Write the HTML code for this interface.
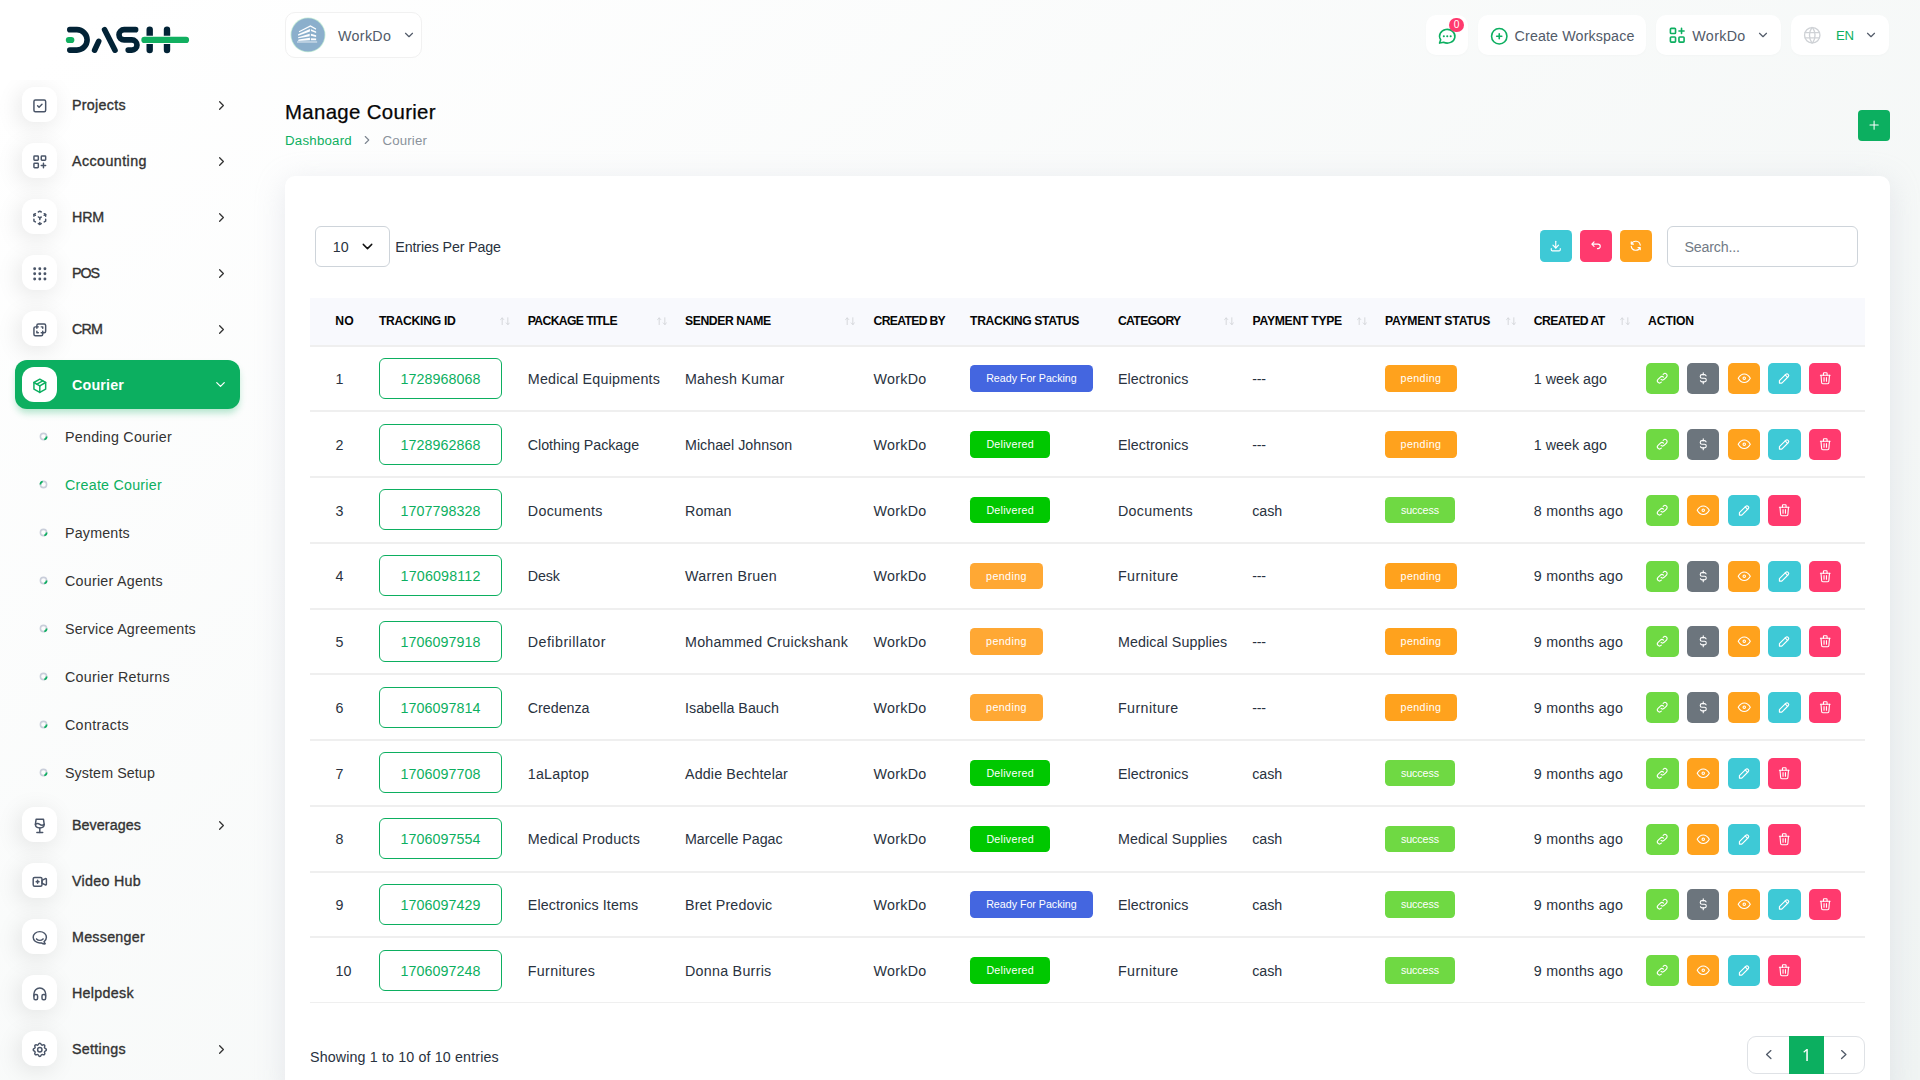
<!DOCTYPE html>
<html lang="en"><head><meta charset="utf-8"><title>Manage Courier</title>
<style>
*{box-sizing:border-box;margin:0;padding:0}
html,body{width:1920px;height:1080px;overflow:hidden}
body{font-family:"Liberation Sans",sans-serif;position:relative;background:linear-gradient(141.55deg,#ffffff 3.46%,#f0f4f3 99.86%);}
.t{position:absolute;white-space:nowrap;line-height:20px;height:20px;display:block}
.b{position:absolute}
.i{position:absolute;fill:none;stroke-linecap:round;stroke-linejoin:round;overflow:visible}
</style></head><body>

<svg class="b" style="left:60px;top:20px" width="140" height="40" viewBox="60 20 140 40" fill="none" stroke-linecap="round" stroke-linejoin="round">
<g stroke="#022336" stroke-width="5.6">
<path d="M69.8 29.65H76.9A10.2 10.2 0 0 1 76.9 50.1H69.8"/>
<path d="M104.6 29.7L115 50.2"/><path d="M98.7 41.4L94.6 50.2"/>
<path d="M135.6 29.65H124.1A5.1 5.1 0 0 0 124.1 39.9H131.9A5.1 5.1 0 0 1 131.9 50.1H128.2"/>
<path d="M149.7 29.8V50" stroke-width="6.4"/><path d="M167 29.8V50" stroke-width="6.4"/>
</g>
<path d="M144.4 39.9H186" stroke="#fff" stroke-width="8.3"/>
<g stroke="#11AF60" stroke-width="6.2"><path d="M68.9 40H71.3"/><path d="M144.4 39.9H186"/></g>
</svg>

<div class="b" style="left:0;top:0;width:280px;height:1080px;clip-path:inset(80px 0 0 0)">
<div class="b" style="left:22.00px;top:87.00px;width:35.00px;height:35.00px;background:#fff;border-radius:12px;box-shadow:-3px 4px 23px rgba(0,0,0,0.1);"></div>
<svg class="i" style="left:31.00px;top:97.05px;" width="17.6" height="17.6" viewBox="0 0 24 24" stroke="#4a5568" stroke-width="2"><rect x="4" y="4" width="16" height="16" rx="2"/><path d="M9 12l2 2l4 -4"/></svg>
<span class="t" style="left:72.00px;top:95.48px;font-size:14.28px;letter-spacing:0.302px;color:#333;-webkit-text-stroke:0.35px #333;">Projects</span>
<svg class="i" style="left:214.00px;top:98.00px;" width="15" height="15" viewBox="0 0 24 24" stroke="#333" stroke-width="2"><path d="M9 6l6 6l-6 6"/></svg>
<div class="b" style="left:22.00px;top:143.00px;width:35.00px;height:35.00px;background:#fff;border-radius:12px;box-shadow:-3px 4px 23px rgba(0,0,0,0.1);"></div>
<svg class="i" style="left:31.00px;top:153.05px;" width="17.6" height="17.6" viewBox="0 0 24 24" stroke="#4a5568" stroke-width="2"><rect x="4" y="4" width="6" height="6" rx="1"/><rect x="14" y="4" width="6" height="6" rx="1"/><rect x="4" y="14" width="6" height="6" rx="1"/><path d="M14 17h6m-3 -3v6"/></svg>
<span class="t" style="left:72.00px;top:151.48px;font-size:14.28px;letter-spacing:0.434px;color:#333;-webkit-text-stroke:0.35px #333;">Accounting</span>
<svg class="i" style="left:214.00px;top:154.00px;" width="15" height="15" viewBox="0 0 24 24" stroke="#333" stroke-width="2"><path d="M9 6l6 6l-6 6"/></svg>
<div class="b" style="left:22.00px;top:199.00px;width:35.00px;height:35.00px;background:#fff;border-radius:12px;box-shadow:-3px 4px 23px rgba(0,0,0,0.1);"></div>
<svg class="i" style="left:31.00px;top:209.05px;" width="17.6" height="17.6" viewBox="0 0 24 24" stroke="#4a5568" stroke-width="2"><path d="M6 17.6l-2 -1.1v-2.5"/><path d="M4 10v-2.5l2 -1.1"/><path d="M10 4.1l2 -1.1l2 1.1"/><path d="M18 6.4l2 1.1v2.5"/><path d="M20 14v2.5l-2 1.12"/><path d="M14 19.9l-2 1.1l-2 -1.1"/><path d="M12 12l2 -1.1"/><path d="M18 8.6l2 -1.1"/><path d="M12 12l0 2.5"/><path d="M12 18.5l0 2.5"/><path d="M12 12l-2 -1.12"/><path d="M6 8.6l-2 -1.1"/></svg>
<span class="t" style="left:72.00px;top:207.48px;font-size:14.28px;letter-spacing:-0.174px;color:#333;-webkit-text-stroke:0.35px #333;">HRM</span>
<svg class="i" style="left:214.00px;top:210.00px;" width="15" height="15" viewBox="0 0 24 24" stroke="#333" stroke-width="2"><path d="M9 6l6 6l-6 6"/></svg>
<div class="b" style="left:22.00px;top:255.00px;width:35.00px;height:35.00px;background:#fff;border-radius:12px;box-shadow:-3px 4px 23px rgba(0,0,0,0.1);"></div>
<svg class="i" style="left:31.00px;top:265.05px;" width="17.6" height="17.6" viewBox="0 0 24 24" stroke="#4a5568" stroke-width="2"><circle cx="5" cy="5" r="1"/><circle cx="12" cy="5" r="1"/><circle cx="19" cy="5" r="1"/><circle cx="5" cy="12" r="1"/><circle cx="12" cy="12" r="1"/><circle cx="19" cy="12" r="1"/><circle cx="5" cy="19" r="1"/><circle cx="12" cy="19" r="1"/><circle cx="19" cy="19" r="1"/></svg>
<span class="t" style="left:72.00px;top:263.48px;font-size:14.28px;letter-spacing:-1.053px;color:#333;-webkit-text-stroke:0.35px #333;">POS</span>
<svg class="i" style="left:214.00px;top:266.00px;" width="15" height="15" viewBox="0 0 24 24" stroke="#333" stroke-width="2"><path d="M9 6l6 6l-6 6"/></svg>
<div class="b" style="left:22.00px;top:311.00px;width:35.00px;height:35.00px;background:#fff;border-radius:12px;box-shadow:-3px 4px 23px rgba(0,0,0,0.1);"></div>
<svg class="i" style="left:31.00px;top:321.05px;" width="17.6" height="17.6" viewBox="0 0 24 24" stroke="#4a5568" stroke-width="2"><path d="M16 16v2a2 2 0 0 1 -2 2h-8a2 2 0 0 1 -2 -2v-8a2 2 0 0 1 2 -2h2v-2a2 2 0 0 1 2 -2h8a2 2 0 0 1 2 2v8a2 2 0 0 1 -2 2h-2"/><path d="M10 8l-2 0l0 2"/><path d="M8 14l0 2l2 0"/><path d="M14 8l2 0l0 2"/><path d="M16 14l0 2l-2 0"/></svg>
<span class="t" style="left:72.00px;top:319.48px;font-size:14.28px;letter-spacing:-0.841px;color:#333;-webkit-text-stroke:0.35px #333;">CRM</span>
<svg class="i" style="left:214.00px;top:322.00px;" width="15" height="15" viewBox="0 0 24 24" stroke="#333" stroke-width="2"><path d="M9 6l6 6l-6 6"/></svg>
<div class="b" style="left:15.00px;top:360.00px;width:225.00px;height:49.00px;background:#0CAF60;border-radius:12px;box-shadow:0 5px 7px -1px rgba(12,175,96,0.3);"></div>
<div class="b" style="left:22.00px;top:367.00px;width:35.00px;height:35.00px;background:#fff;border-radius:12px;"></div>
<svg class="i" style="left:31.00px;top:377.05px;" width="17.6" height="17.6" viewBox="0 0 24 24" stroke="#0CAF60" stroke-width="2"><path d="M12 3l8 4.5l0 9l-8 4.5l-8 -4.5l0 -9l8 -4.5"/><path d="M12 12l8 -4.5"/><path d="M12 12l0 9"/><path d="M12 12l-8 -4.5"/><path d="M16 5.25l-8 4.5"/></svg>
<span class="t" style="left:72.00px;top:375.48px;font-size:14.30px;letter-spacing:0.164px;color:#fff;font-weight:700;">Courier</span>
<svg class="i" style="left:213.00px;top:376.90px;" width="15" height="15" viewBox="0 0 24 24" stroke="#fff" stroke-width="2"><path d="M6 9l6 6l6 -6"/></svg>
<svg class="b" style="left:39.3px;top:431.6px" width="9" height="9" viewBox="0 0 9 9" fill="none"><circle cx="4.5" cy="4.5" r="3.1" stroke="#c9ceda" stroke-width="1.6"/><path transform="" d="M7.6 4.5A3.1 3.1 0 0 1 5.3 7.5" stroke="#0CAF60" stroke-width="1.7"/></svg>
<span class="t" style="left:65.00px;top:427.48px;font-size:14.28px;letter-spacing:0.253px;color:#333;">Pending Courier</span>
<svg class="b" style="left:39.3px;top:479.6px" width="9" height="9" viewBox="0 0 9 9" fill="none"><circle cx="4.5" cy="4.5" r="3.1" stroke="#c9ceda" stroke-width="1.6"/><path transform="rotate(180 4.5 4.5)" d="M7.6 4.5A3.1 3.1 0 0 1 5.3 7.5" stroke="#0CAF60" stroke-width="1.7"/></svg>
<span class="t" style="left:65.00px;top:475.48px;font-size:14.28px;letter-spacing:0.239px;color:#0CAF60;">Create Courier</span>
<svg class="b" style="left:39.3px;top:527.6px" width="9" height="9" viewBox="0 0 9 9" fill="none"><circle cx="4.5" cy="4.5" r="3.1" stroke="#c9ceda" stroke-width="1.6"/><path transform="" d="M7.6 4.5A3.1 3.1 0 0 1 5.3 7.5" stroke="#0CAF60" stroke-width="1.7"/></svg>
<span class="t" style="left:65.00px;top:523.48px;font-size:14.28px;letter-spacing:0.188px;color:#333;">Payments</span>
<svg class="b" style="left:39.3px;top:575.6px" width="9" height="9" viewBox="0 0 9 9" fill="none"><circle cx="4.5" cy="4.5" r="3.1" stroke="#c9ceda" stroke-width="1.6"/><path transform="" d="M7.6 4.5A3.1 3.1 0 0 1 5.3 7.5" stroke="#0CAF60" stroke-width="1.7"/></svg>
<span class="t" style="left:65.00px;top:571.48px;font-size:14.28px;letter-spacing:0.253px;color:#333;">Courier Agents</span>
<svg class="b" style="left:39.3px;top:623.6px" width="9" height="9" viewBox="0 0 9 9" fill="none"><circle cx="4.5" cy="4.5" r="3.1" stroke="#c9ceda" stroke-width="1.6"/><path transform="" d="M7.6 4.5A3.1 3.1 0 0 1 5.3 7.5" stroke="#0CAF60" stroke-width="1.7"/></svg>
<span class="t" style="left:65.00px;top:619.48px;font-size:14.28px;letter-spacing:0.178px;color:#333;">Service Agreements</span>
<svg class="b" style="left:39.3px;top:671.6px" width="9" height="9" viewBox="0 0 9 9" fill="none"><circle cx="4.5" cy="4.5" r="3.1" stroke="#c9ceda" stroke-width="1.6"/><path transform="" d="M7.6 4.5A3.1 3.1 0 0 1 5.3 7.5" stroke="#0CAF60" stroke-width="1.7"/></svg>
<span class="t" style="left:65.00px;top:667.48px;font-size:14.28px;letter-spacing:0.280px;color:#333;">Courier Returns</span>
<svg class="b" style="left:39.3px;top:719.6px" width="9" height="9" viewBox="0 0 9 9" fill="none"><circle cx="4.5" cy="4.5" r="3.1" stroke="#c9ceda" stroke-width="1.6"/><path transform="" d="M7.6 4.5A3.1 3.1 0 0 1 5.3 7.5" stroke="#0CAF60" stroke-width="1.7"/></svg>
<span class="t" style="left:65.00px;top:715.48px;font-size:14.28px;letter-spacing:0.321px;color:#333;">Contracts</span>
<svg class="b" style="left:39.3px;top:767.6px" width="9" height="9" viewBox="0 0 9 9" fill="none"><circle cx="4.5" cy="4.5" r="3.1" stroke="#c9ceda" stroke-width="1.6"/><path transform="" d="M7.6 4.5A3.1 3.1 0 0 1 5.3 7.5" stroke="#0CAF60" stroke-width="1.7"/></svg>
<span class="t" style="left:65.00px;top:763.48px;font-size:14.28px;letter-spacing:0.092px;color:#333;">System Setup</span>
<div class="b" style="left:22.00px;top:807.00px;width:35.00px;height:35.00px;background:#fff;border-radius:12px;box-shadow:-3px 4px 23px rgba(0,0,0,0.1);"></div>
<svg class="i" style="left:31.00px;top:817.05px;" width="17.6" height="17.6" viewBox="0 0 24 24" stroke="#4a5568" stroke-width="2"><path d="M8 21l8 0"/><path d="M12 15l0 6"/><path d="M17 3l1 7c0 3.012 -2.686 5 -6 5s-6 -1.988 -6 -5l1 -7h10z"/><path d="M6 10a5 5 0 0 1 6 0a5 5 0 0 0 6 0"/></svg>
<span class="t" style="left:72.00px;top:815.48px;font-size:14.28px;letter-spacing:0.081px;color:#333;-webkit-text-stroke:0.35px #333;">Beverages</span>
<svg class="i" style="left:214.00px;top:818.00px;" width="15" height="15" viewBox="0 0 24 24" stroke="#333" stroke-width="2"><path d="M9 6l6 6l-6 6"/></svg>
<div class="b" style="left:22.00px;top:863.00px;width:35.00px;height:35.00px;background:#fff;border-radius:12px;box-shadow:-3px 4px 23px rgba(0,0,0,0.1);"></div>
<svg class="i" style="left:31.00px;top:873.05px;" width="17.6" height="17.6" viewBox="0 0 24 24" stroke="#4a5568" stroke-width="2"><path d="M15 10l4.553 -2.276a1 1 0 0 1 1.447 .894v6.764a1 1 0 0 1 -1.447 .894l-4.553 -2.276v-4z"/><rect x="3" y="6" width="12" height="12" rx="2"/><path d="M7 12l4 0"/><path d="M9 10l0 4"/></svg>
<span class="t" style="left:72.00px;top:871.48px;font-size:14.28px;letter-spacing:0.285px;color:#333;-webkit-text-stroke:0.35px #333;">Video Hub</span>
<div class="b" style="left:22.00px;top:919.00px;width:35.00px;height:35.00px;background:#fff;border-radius:12px;box-shadow:-3px 4px 23px rgba(0,0,0,0.1);"></div>
<svg class="i" style="left:31.00px;top:929.05px;" width="17.6" height="17.6" viewBox="0 0 24 24" stroke="#4a5568" stroke-width="2"><path d="M17.802 17.292s.077 -.055 .2 -.149c1.843 -1.425 3 -3.49 3 -5.789c0 -4.286 -4.03 -7.764 -9 -7.764c-4.97 0 -9 3.478 -9 7.764c0 4.288 4.03 7.646 9 7.646c.424 0 1.12 -.028 2.088 -.084c1.262 .82 3.104 1.493 4.716 1.493c.499 0 .734 -.41 .414 -.828c-.486 -.596 -1.156 -1.551 -1.416 -2.29z"/><path d="M7.5 13.5c2.5 2.5 6.5 2.5 9 0"/></svg>
<span class="t" style="left:72.00px;top:927.48px;font-size:14.28px;letter-spacing:0.262px;color:#333;-webkit-text-stroke:0.35px #333;">Messenger</span>
<div class="b" style="left:22.00px;top:975.00px;width:35.00px;height:35.00px;background:#fff;border-radius:12px;box-shadow:-3px 4px 23px rgba(0,0,0,0.1);"></div>
<svg class="i" style="left:31.00px;top:985.05px;" width="17.6" height="17.6" viewBox="0 0 24 24" stroke="#4a5568" stroke-width="2"><rect x="4" y="13" rx="2" width="5" height="7"/><rect x="15" y="13" rx="2" width="5" height="7"/><path d="M4 15v-3a8 8 0 0 1 16 0v3"/></svg>
<span class="t" style="left:72.00px;top:983.48px;font-size:14.28px;letter-spacing:0.308px;color:#333;-webkit-text-stroke:0.35px #333;">Helpdesk</span>
<div class="b" style="left:22.00px;top:1031.00px;width:35.00px;height:35.00px;background:#fff;border-radius:12px;box-shadow:-3px 4px 23px rgba(0,0,0,0.1);"></div>
<svg class="i" style="left:31.00px;top:1041.05px;" width="17.6" height="17.6" viewBox="0 0 24 24" stroke="#4a5568" stroke-width="2"><path d="M10.325 4.317c.426 -1.756 2.924 -1.756 3.35 0a1.724 1.724 0 0 0 2.573 1.066c1.543 -.94 3.31 .826 2.37 2.37a1.724 1.724 0 0 0 1.065 2.572c1.756 .426 1.756 2.924 0 3.35a1.724 1.724 0 0 0 -1.066 2.573c.94 1.543 -.826 3.31 -2.37 2.37a1.724 1.724 0 0 0 -2.572 1.065c-.426 1.756 -2.924 1.756 -3.35 0a1.724 1.724 0 0 0 -2.573 -1.066c-1.543 .94 -3.31 -.826 -2.37 -2.37a1.724 1.724 0 0 0 -1.065 -2.572c-1.756 -.426 -1.756 -2.924 0 -3.35a1.724 1.724 0 0 0 1.066 -2.573c-.94 -1.543 .826 -3.31 2.37 -2.37c1 .608 2.296 .07 2.572 -1.065z"/><circle cx="12" cy="12" r="3"/></svg>
<span class="t" style="left:72.00px;top:1039.48px;font-size:14.28px;letter-spacing:0.300px;color:#333;-webkit-text-stroke:0.35px #333;">Settings</span>
<svg class="i" style="left:214.00px;top:1042.00px;" width="15" height="15" viewBox="0 0 24 24" stroke="#333" stroke-width="2"><path d="M9 6l6 6l-6 6"/></svg>
</div>
<div class="b" style="left:285.00px;top:12.00px;width:136.50px;height:45.50px;background:#fff;border-radius:10px;border:1px solid #f1f1f1;"></div>
<svg class="b" style="left:286px;top:13px" width="48" height="44" viewBox="0 0 1178 1080"><circle cx="540" cy="538" r="428" fill="#c6edd8"/><circle cx="540" cy="538" r="408" fill="#8bafcc"/>
<g fill="#fdfeff"><path d="M315 445L600 298L740 378L735 410L600 335L325 470z"/><path d="M298 522L588 392V455L298 558z"/><path d="M612 398L740 452V492L612 442z"/><path d="M298 596L582 512V570L298 622z"/><path d="M612 512L740 545V588L612 560z"/><path d="M308 650L588 606V668L298 686z"/><path d="M612 618L740 624V668H612z"/></g><path d="M270 685H765V735H270z" fill="#b9cfe1"/></svg>
<span class="t" style="left:338.00px;top:26.18px;font-size:14.28px;letter-spacing:0.331px;color:#525b69;">WorkDo</span>
<svg class="i" style="left:401.80px;top:28.40px;" width="14" height="14" viewBox="0 0 24 24" stroke="#525b69" stroke-width="2"><path d="M6 9l6 6l6 -6"/></svg>
<div class="b" style="left:1426.00px;top:15.00px;width:42.00px;height:40.00px;background:#fff;border-radius:10px;box-shadow:0 1px 3px rgba(0,0,0,0.02);"></div>
<svg class="i" style="left:1437.05px;top:25.55px;" width="20.5" height="20.5" viewBox="0 0 24 24" stroke="#0CAF60" stroke-width="1.85"><path d="M3 20l1.3 -3.9a9 8 0 1 1 3.4 2.9l-4.7 1"/><path d="M12 12v.01M8 12v.01M16 12v.01" stroke-width="2.5"/></svg>
<div class="b" style="left:1449.00px;top:17.70px;width:15.00px;height:14.30px;background:#ff3a6e;border-radius:8px;"></div>
<span class="t" style="left:1453.74px;top:14.95px;font-size:10.20px;letter-spacing:0.045px;color:#fff;">0</span>
<div class="b" style="left:1478.00px;top:15.00px;width:168.00px;height:40.00px;background:#fff;border-radius:10px;box-shadow:0 1px 3px rgba(0,0,0,0.02);"></div>
<svg class="i" style="left:1489.15px;top:25.50px;" width="20.5" height="20.5" viewBox="0 0 24 24" stroke="#0CAF60" stroke-width="1.85"><circle cx="12" cy="12" r="9"/><path d="M9 12h6"/><path d="M12 9v6"/></svg>
<span class="t" style="left:1514.60px;top:25.98px;font-size:14.28px;letter-spacing:0.125px;color:#525b69;">Create Workspace</span>
<div class="b" style="left:1656.00px;top:15.00px;width:125.00px;height:40.00px;background:#fff;border-radius:10px;box-shadow:0 1px 3px rgba(0,0,0,0.02);"></div>
<svg class="i" style="left:1667.05px;top:25.35px;" width="20.5" height="20.5" viewBox="0 0 24 24" stroke="#0CAF60" stroke-width="1.9"><rect x="4" y="4" width="6" height="6" rx="1"/><rect x="4" y="14" width="6" height="6" rx="1"/><rect x="14" y="14" width="6" height="6" rx="1"/><path d="M14 7h6m-3 -3v6"/></svg>
<span class="t" style="left:1692.30px;top:25.98px;font-size:14.28px;letter-spacing:0.348px;color:#525b69;">WorkDo</span>
<svg class="i" style="left:1756.00px;top:28.20px;" width="14" height="14" viewBox="0 0 24 24" stroke="#525b69" stroke-width="2"><path d="M6 9l6 6l6 -6"/></svg>
<div class="b" style="left:1791.00px;top:15.00px;width:98.00px;height:40.00px;background:#fff;border-radius:10px;box-shadow:0 1px 3px rgba(0,0,0,0.02);"></div>
<svg class="i" style="left:1801.95px;top:25.25px;" width="20.5" height="20.5" viewBox="0 0 24 24" stroke="#cfd2d6" stroke-width="1.6"><circle cx="12" cy="12" r="9"/><path d="M3.6 9h16.8"/><path d="M3.6 15h16.8"/><path d="M11.5 3a17 17 0 0 0 0 18"/><path d="M12.5 3a17 17 0 0 1 0 18"/></svg>
<span class="t" style="left:1836.00px;top:26.36px;font-size:13.20px;letter-spacing:-0.419px;color:#0CAF60;">EN</span>
<svg class="i" style="left:1864.00px;top:28.20px;" width="14" height="14" viewBox="0 0 24 24" stroke="#525b69" stroke-width="2"><path d="M6 9l6 6l6 -6"/></svg>
<span class="t" style="left:285.00px;top:102.19px;font-size:20.40px;letter-spacing:0.337px;color:#060606;-webkit-text-stroke:0.25px #060606;">Manage Courier</span>
<span class="t" style="left:285.00px;top:131.25px;font-size:13.26px;letter-spacing:0.237px;color:#0CAF60;">Dashboard</span>
<svg class="i" style="left:359.80px;top:133.30px;" width="14" height="14" viewBox="0 0 24 24" stroke="#7d8590" stroke-width="1.9"><path d="M9 6l6 6l-6 6"/></svg>
<span class="t" style="left:382.50px;top:131.25px;font-size:13.26px;letter-spacing:0.146px;color:#8a929b;">Courier</span>
<div class="b" style="left:1858.00px;top:110.00px;width:32.00px;height:31.00px;background:#0CAF60;border-radius:4px;"></div>
<svg class="i" style="left:1867.00px;top:117.80px;" width="14.2" height="14.2" viewBox="0 0 24 24" stroke="#fff" stroke-width="1.75"><path d="M12 5v14"/><path d="M5 12h14"/></svg>
<div class="b" style="left:285.00px;top:176.00px;width:1605.00px;height:920.00px;background:#fff;border-radius:10px;box-shadow:0 6px 30px rgba(182,186,203,0.3);"></div>
<div class="b" style="left:315.00px;top:226.00px;width:75.00px;height:40.60px;background:#fff;border-radius:6px;border:1px solid #ced4da;"></div>
<span class="t" style="left:332.70px;top:236.98px;font-size:14.28px;letter-spacing:0.063px;color:#293240;">10</span>
<svg class="i" style="left:359.30px;top:238.30px;" width="17" height="17" viewBox="0 0 24 24" stroke="#111" stroke-width="2"><path d="M6 9l6 6l6 -6"/></svg>
<span class="t" style="left:395.30px;top:236.98px;font-size:14.28px;letter-spacing:-0.141px;color:#293240;">Entries Per Page</span>
<div class="b" style="left:1540.00px;top:230.00px;width:32.00px;height:32.00px;background:#3ec9d6;border-radius:4.5px;"></div>
<svg class="i" style="left:1549.25px;top:239.05px;" width="13.5" height="13.5" viewBox="0 0 24 24" stroke="#fff" stroke-width="2"><path d="M4 17v2a2 2 0 0 0 2 2h12a2 2 0 0 0 2 -2v-2"/><path d="M7 11l5 5l5 -5"/><path d="M12 4v12"/></svg>
<div class="b" style="left:1580.00px;top:230.00px;width:32.00px;height:32.00px;background:#ff3a6e;border-radius:4.5px;"></div>
<svg class="i" style="left:1589.25px;top:239.05px;" width="13.5" height="13.5" viewBox="0 0 24 24" stroke="#fff" stroke-width="2"><path d="M9 13l-4 -4l4 -4m-4 4h11a4 4 0 0 1 0 8h-1"/></svg>
<div class="b" style="left:1620.00px;top:230.00px;width:32.00px;height:32.00px;background:#ffa21d;border-radius:4.5px;"></div>
<svg class="i" style="left:1629.25px;top:239.05px;" width="13.5" height="13.5" viewBox="0 0 24 24" stroke="#fff" stroke-width="2"><path d="M20 11a8.1 8.1 0 0 0 -15.5 -2m-.5 -4v4h4"/><path d="M4 13a8.1 8.1 0 0 0 15.5 2m.5 4v-4h-4"/></svg>
<div class="b" style="left:1667.00px;top:226.00px;width:191.00px;height:40.60px;background:#fff;border-radius:6px;border:1px solid #ced4da;"></div>
<span class="t" style="left:1684.40px;top:236.98px;font-size:14.28px;letter-spacing:-0.186px;color:#727b86;">Search...</span>
<div class="b" style="left:310.00px;top:298.00px;width:1555.00px;height:47.00px;background:#f8f9fd;border-radius:0px;"></div>
<div class="b" style="left:310.00px;top:345.00px;width:1555.00px;height:2.00px;background:#efefef;border-radius:0px;"></div>
<span class="t" style="left:335.30px;top:310.97px;font-size:12.20px;letter-spacing:0.200px;color:#060606;font-weight:700;">NO</span>
<span class="t" style="left:378.90px;top:310.97px;font-size:12.20px;letter-spacing:-0.289px;color:#060606;font-weight:700;">TRACKING ID</span>
<svg class="b" style="left:499.5px;top:316.6px" width="10.4" height="8.5" viewBox="0 0 11 9" fill="none" stroke="#d3d6da" stroke-width="1" stroke-linecap="round" stroke-linejoin="round"><path d="M2.3 8.2V1M0.6 2.7L2.3 1L4 2.7"/><path d="M8.3 0.8V8M6.6 6.3L8.3 8L10 6.3"/></svg>
<span class="t" style="left:527.70px;top:310.97px;font-size:12.20px;letter-spacing:-0.621px;color:#060606;font-weight:700;">PACKAGE TITLE</span>
<svg class="b" style="left:656.5px;top:316.6px" width="10.4" height="8.5" viewBox="0 0 11 9" fill="none" stroke="#d3d6da" stroke-width="1" stroke-linecap="round" stroke-linejoin="round"><path d="M2.3 8.2V1M0.6 2.7L2.3 1L4 2.7"/><path d="M8.3 0.8V8M6.6 6.3L8.3 8L10 6.3"/></svg>
<span class="t" style="left:685.00px;top:310.97px;font-size:12.20px;letter-spacing:-0.405px;color:#060606;font-weight:700;">SENDER NAME</span>
<svg class="b" style="left:844.5px;top:316.6px" width="10.4" height="8.5" viewBox="0 0 11 9" fill="none" stroke="#d3d6da" stroke-width="1" stroke-linecap="round" stroke-linejoin="round"><path d="M2.3 8.2V1M0.6 2.7L2.3 1L4 2.7"/><path d="M8.3 0.8V8M6.6 6.3L8.3 8L10 6.3"/></svg>
<span class="t" style="left:873.60px;top:310.97px;font-size:12.20px;letter-spacing:-0.690px;color:#060606;font-weight:700;">CREATED BY</span>
<span class="t" style="left:970.10px;top:310.97px;font-size:12.20px;letter-spacing:-0.391px;color:#060606;font-weight:700;">TRACKING STATUS</span>
<span class="t" style="left:1117.90px;top:310.97px;font-size:12.20px;letter-spacing:-0.623px;color:#060606;font-weight:700;">CATEGORY</span>
<svg class="b" style="left:1223.5px;top:316.6px" width="10.4" height="8.5" viewBox="0 0 11 9" fill="none" stroke="#d3d6da" stroke-width="1" stroke-linecap="round" stroke-linejoin="round"><path d="M2.3 8.2V1M0.6 2.7L2.3 1L4 2.7"/><path d="M8.3 0.8V8M6.6 6.3L8.3 8L10 6.3"/></svg>
<span class="t" style="left:1252.60px;top:310.97px;font-size:12.20px;letter-spacing:-0.290px;color:#060606;font-weight:700;">PAYMENT TYPE</span>
<svg class="b" style="left:1356.5px;top:316.6px" width="10.4" height="8.5" viewBox="0 0 11 9" fill="none" stroke="#d3d6da" stroke-width="1" stroke-linecap="round" stroke-linejoin="round"><path d="M2.3 8.2V1M0.6 2.7L2.3 1L4 2.7"/><path d="M8.3 0.8V8M6.6 6.3L8.3 8L10 6.3"/></svg>
<span class="t" style="left:1384.90px;top:310.97px;font-size:12.20px;letter-spacing:-0.186px;color:#060606;font-weight:700;">PAYMENT STATUS</span>
<svg class="b" style="left:1505.5px;top:316.6px" width="10.4" height="8.5" viewBox="0 0 11 9" fill="none" stroke="#d3d6da" stroke-width="1" stroke-linecap="round" stroke-linejoin="round"><path d="M2.3 8.2V1M0.6 2.7L2.3 1L4 2.7"/><path d="M8.3 0.8V8M6.6 6.3L8.3 8L10 6.3"/></svg>
<span class="t" style="left:1533.75px;top:310.97px;font-size:12.20px;letter-spacing:-0.536px;color:#060606;font-weight:700;">CREATED AT</span>
<svg class="b" style="left:1620.3px;top:316.6px" width="10.4" height="8.5" viewBox="0 0 11 9" fill="none" stroke="#d3d6da" stroke-width="1" stroke-linecap="round" stroke-linejoin="round"><path d="M2.3 8.2V1M0.6 2.7L2.3 1L4 2.7"/><path d="M8.3 0.8V8M6.6 6.3L8.3 8L10 6.3"/></svg>
<span class="t" style="left:1648.10px;top:310.97px;font-size:12.20px;letter-spacing:-0.144px;color:#060606;font-weight:700;">ACTION</span>
<div class="b" style="left:310.00px;top:410.00px;width:1555.00px;height:2.00px;background:#efefef;border-radius:0px;"></div>
<span class="t" style="left:335.50px;top:369.05px;font-size:14.28px;letter-spacing:0.063px;color:#293240;">1</span>
<div class="b" style="left:379.00px;top:358.00px;width:123.00px;height:40.70px;background:#fff;border-radius:6px;border:1px solid #0CAF60;"></div>
<span class="t" style="left:400.58px;top:369.05px;font-size:14.28px;letter-spacing:0.063px;color:#0CAF60;">1728968068</span>
<span class="t" style="left:527.80px;top:369.05px;font-size:14.28px;letter-spacing:0.213px;color:#293240;">Medical Equipments</span>
<span class="t" style="left:685.00px;top:369.05px;font-size:14.28px;letter-spacing:0.221px;color:#293240;">Mahesh Kumar</span>
<span class="t" style="left:873.50px;top:369.05px;font-size:14.28px;letter-spacing:0.305px;color:#293240;">WorkDo</span>
<div class="b" style="left:970.00px;top:365.00px;width:123.00px;height:26.75px;background:#4466e0;border-radius:4.5px;"></div>
<span class="t" style="left:986.17px;top:368.14px;font-size:10.70px;letter-spacing:-0.019px;color:#fff;">Ready For Packing</span>
<span class="t" style="left:1118.00px;top:369.05px;font-size:14.28px;letter-spacing:0.054px;color:#293240;">Electronics</span>
<span class="t" style="left:1252.30px;top:369.05px;font-size:14.28px;letter-spacing:-0.251px;color:#293240;">---</span>
<div class="b" style="left:1385.00px;top:365.00px;width:72.00px;height:26.75px;background:#ffa21d;border-radius:4.5px;"></div>
<span class="t" style="left:1400.59px;top:368.14px;font-size:10.70px;letter-spacing:0.391px;color:#fff;">pending</span>
<span class="t" style="left:1533.80px;top:369.05px;font-size:14.28px;letter-spacing:0.010px;color:#293240;">1 week ago</span>
<div class="b" style="left:1646.00px;top:363.00px;width:33.00px;height:30.80px;background:#6fd943;border-radius:5px;"></div>
<svg class="i" style="left:1655.25px;top:371.15px;" width="14.5" height="14.5" viewBox="0 0 24 24" stroke="#fff" stroke-width="1.85"><path d="M10 14a3.5 3.5 0 0 0 5 0l4 -4a3.5 3.5 0 0 0 -5 -5l-.5 .5"/><path d="M14 10a3.5 3.5 0 0 0 -5 0l-4 4a3.5 3.5 0 0 0 5 5l.5 -.5"/></svg>
<div class="b" style="left:1687.00px;top:363.00px;width:32.00px;height:30.80px;background:#6c757d;border-radius:5px;"></div>
<svg class="i" style="left:1695.75px;top:371.15px;" width="14.5" height="14.5" viewBox="0 0 24 24" stroke="#fff" stroke-width="1.85"><path d="M16.7 8a3 3 0 0 0 -2.7 -2h-4a3 3 0 0 0 0 6h4a3 3 0 0 1 0 6h-4a3 3 0 0 1 -2.7 -2"/><path d="M12 3v3m0 12v3"/></svg>
<div class="b" style="left:1728.00px;top:363.00px;width:32.00px;height:30.80px;background:#ffa21d;border-radius:5px;"></div>
<svg class="i" style="left:1736.75px;top:371.15px;" width="14.5" height="14.5" viewBox="0 0 24 24" stroke="#fff" stroke-width="1.85"><circle cx="12" cy="12" r="2"/><path d="M22 12c-2.667 4.667 -6 7 -10 7s-7.333 -2.333 -10 -7c2.667 -4.667 6 -7 10 -7s7.333 2.333 10 7"/></svg>
<div class="b" style="left:1768.00px;top:363.00px;width:33.00px;height:30.80px;background:#3ec9d6;border-radius:5px;"></div>
<svg class="i" style="left:1777.25px;top:371.15px;" width="14.5" height="14.5" viewBox="0 0 24 24" stroke="#fff" stroke-width="1.85"><path d="M4 20h4l10.5 -10.5a1.5 1.5 0 0 0 -4 -4l-10.5 10.5v4"/><path d="M13.5 6.5l4 4"/></svg>
<div class="b" style="left:1809.00px;top:363.00px;width:32.00px;height:30.80px;background:#ff3a6e;border-radius:5px;"></div>
<svg class="i" style="left:1817.75px;top:371.15px;" width="14.5" height="14.5" viewBox="0 0 24 24" stroke="#fff" stroke-width="1.85"><path d="M4 7h16"/><path d="M10 11v6"/><path d="M14 11v6"/><path d="M5 7l1 12a2 2 0 0 0 2 2h8a2 2 0 0 0 2 -2l1 -12"/><path d="M9 7v-3a1 1 0 0 1 1 -1h4a1 1 0 0 1 1 1v3"/></svg>
<div class="b" style="left:310.00px;top:476.00px;width:1555.00px;height:2.00px;background:#efefef;border-radius:0px;"></div>
<span class="t" style="left:335.50px;top:435.05px;font-size:14.28px;letter-spacing:0.063px;color:#293240;">2</span>
<div class="b" style="left:379.00px;top:424.00px;width:123.00px;height:40.70px;background:#fff;border-radius:6px;border:1px solid #0CAF60;"></div>
<span class="t" style="left:400.58px;top:435.05px;font-size:14.28px;letter-spacing:0.063px;color:#0CAF60;">1728962868</span>
<span class="t" style="left:527.80px;top:435.05px;font-size:14.28px;letter-spacing:-0.037px;color:#293240;">Clothing Package</span>
<span class="t" style="left:685.00px;top:435.05px;font-size:14.28px;letter-spacing:0.013px;color:#293240;">Michael Johnson</span>
<span class="t" style="left:873.50px;top:435.05px;font-size:14.28px;letter-spacing:0.305px;color:#293240;">WorkDo</span>
<div class="b" style="left:970.00px;top:431.00px;width:80.30px;height:26.75px;background:#00c800;border-radius:4.5px;"></div>
<span class="t" style="left:986.40px;top:434.14px;font-size:10.70px;letter-spacing:0.256px;color:#fff;">Delivered</span>
<span class="t" style="left:1118.00px;top:435.05px;font-size:14.28px;letter-spacing:0.054px;color:#293240;">Electronics</span>
<span class="t" style="left:1252.30px;top:435.05px;font-size:14.28px;letter-spacing:-0.251px;color:#293240;">---</span>
<div class="b" style="left:1385.00px;top:431.00px;width:72.00px;height:26.75px;background:#ffa21d;border-radius:4.5px;"></div>
<span class="t" style="left:1400.59px;top:434.14px;font-size:10.70px;letter-spacing:0.391px;color:#fff;">pending</span>
<span class="t" style="left:1533.80px;top:435.05px;font-size:14.28px;letter-spacing:0.010px;color:#293240;">1 week ago</span>
<div class="b" style="left:1646.00px;top:429.00px;width:33.00px;height:30.80px;background:#6fd943;border-radius:5px;"></div>
<svg class="i" style="left:1655.25px;top:437.15px;" width="14.5" height="14.5" viewBox="0 0 24 24" stroke="#fff" stroke-width="1.85"><path d="M10 14a3.5 3.5 0 0 0 5 0l4 -4a3.5 3.5 0 0 0 -5 -5l-.5 .5"/><path d="M14 10a3.5 3.5 0 0 0 -5 0l-4 4a3.5 3.5 0 0 0 5 5l.5 -.5"/></svg>
<div class="b" style="left:1687.00px;top:429.00px;width:32.00px;height:30.80px;background:#6c757d;border-radius:5px;"></div>
<svg class="i" style="left:1695.75px;top:437.15px;" width="14.5" height="14.5" viewBox="0 0 24 24" stroke="#fff" stroke-width="1.85"><path d="M16.7 8a3 3 0 0 0 -2.7 -2h-4a3 3 0 0 0 0 6h4a3 3 0 0 1 0 6h-4a3 3 0 0 1 -2.7 -2"/><path d="M12 3v3m0 12v3"/></svg>
<div class="b" style="left:1728.00px;top:429.00px;width:32.00px;height:30.80px;background:#ffa21d;border-radius:5px;"></div>
<svg class="i" style="left:1736.75px;top:437.15px;" width="14.5" height="14.5" viewBox="0 0 24 24" stroke="#fff" stroke-width="1.85"><circle cx="12" cy="12" r="2"/><path d="M22 12c-2.667 4.667 -6 7 -10 7s-7.333 -2.333 -10 -7c2.667 -4.667 6 -7 10 -7s7.333 2.333 10 7"/></svg>
<div class="b" style="left:1768.00px;top:429.00px;width:33.00px;height:30.80px;background:#3ec9d6;border-radius:5px;"></div>
<svg class="i" style="left:1777.25px;top:437.15px;" width="14.5" height="14.5" viewBox="0 0 24 24" stroke="#fff" stroke-width="1.85"><path d="M4 20h4l10.5 -10.5a1.5 1.5 0 0 0 -4 -4l-10.5 10.5v4"/><path d="M13.5 6.5l4 4"/></svg>
<div class="b" style="left:1809.00px;top:429.00px;width:32.00px;height:30.80px;background:#ff3a6e;border-radius:5px;"></div>
<svg class="i" style="left:1817.75px;top:437.15px;" width="14.5" height="14.5" viewBox="0 0 24 24" stroke="#fff" stroke-width="1.85"><path d="M4 7h16"/><path d="M10 11v6"/><path d="M14 11v6"/><path d="M5 7l1 12a2 2 0 0 0 2 2h8a2 2 0 0 0 2 -2l1 -12"/><path d="M9 7v-3a1 1 0 0 1 1 -1h4a1 1 0 0 1 1 1v3"/></svg>
<div class="b" style="left:310.00px;top:542.00px;width:1555.00px;height:2.00px;background:#efefef;border-radius:0px;"></div>
<span class="t" style="left:335.50px;top:501.05px;font-size:14.28px;letter-spacing:0.063px;color:#293240;">3</span>
<div class="b" style="left:379.00px;top:489.00px;width:123.00px;height:40.70px;background:#fff;border-radius:6px;border:1px solid #0CAF60;"></div>
<span class="t" style="left:400.58px;top:501.05px;font-size:14.28px;letter-spacing:0.063px;color:#0CAF60;">1707798328</span>
<span class="t" style="left:527.80px;top:501.05px;font-size:14.28px;letter-spacing:0.310px;color:#293240;">Documents</span>
<span class="t" style="left:685.00px;top:501.05px;font-size:14.28px;letter-spacing:0.095px;color:#293240;">Roman</span>
<span class="t" style="left:873.50px;top:501.05px;font-size:14.28px;letter-spacing:0.305px;color:#293240;">WorkDo</span>
<div class="b" style="left:970.00px;top:497.00px;width:80.30px;height:25.75px;background:#00c800;border-radius:4.5px;"></div>
<span class="t" style="left:986.40px;top:500.14px;font-size:10.70px;letter-spacing:0.256px;color:#fff;">Delivered</span>
<span class="t" style="left:1118.00px;top:501.05px;font-size:14.28px;letter-spacing:0.310px;color:#293240;">Documents</span>
<span class="t" style="left:1252.30px;top:501.05px;font-size:14.28px;letter-spacing:-0.110px;color:#293240;">cash</span>
<div class="b" style="left:1385.00px;top:497.00px;width:70.00px;height:25.75px;background:#6fd943;border-radius:4.5px;"></div>
<span class="t" style="left:1400.96px;top:500.14px;font-size:10.70px;letter-spacing:-0.083px;color:#fff;">success</span>
<span class="t" style="left:1533.80px;top:501.05px;font-size:14.28px;letter-spacing:0.245px;color:#293240;">8 months ago</span>
<div class="b" style="left:1646.00px;top:495.00px;width:33.00px;height:30.80px;background:#6fd943;border-radius:5px;"></div>
<svg class="i" style="left:1655.25px;top:503.15px;" width="14.5" height="14.5" viewBox="0 0 24 24" stroke="#fff" stroke-width="1.85"><path d="M10 14a3.5 3.5 0 0 0 5 0l4 -4a3.5 3.5 0 0 0 -5 -5l-.5 .5"/><path d="M14 10a3.5 3.5 0 0 0 -5 0l-4 4a3.5 3.5 0 0 0 5 5l.5 -.5"/></svg>
<div class="b" style="left:1687.00px;top:495.00px;width:32.00px;height:30.80px;background:#ffa21d;border-radius:5px;"></div>
<svg class="i" style="left:1695.75px;top:503.15px;" width="14.5" height="14.5" viewBox="0 0 24 24" stroke="#fff" stroke-width="1.85"><circle cx="12" cy="12" r="2"/><path d="M22 12c-2.667 4.667 -6 7 -10 7s-7.333 -2.333 -10 -7c2.667 -4.667 6 -7 10 -7s7.333 2.333 10 7"/></svg>
<div class="b" style="left:1728.00px;top:495.00px;width:32.00px;height:30.80px;background:#3ec9d6;border-radius:5px;"></div>
<svg class="i" style="left:1736.75px;top:503.15px;" width="14.5" height="14.5" viewBox="0 0 24 24" stroke="#fff" stroke-width="1.85"><path d="M4 20h4l10.5 -10.5a1.5 1.5 0 0 0 -4 -4l-10.5 10.5v4"/><path d="M13.5 6.5l4 4"/></svg>
<div class="b" style="left:1768.00px;top:495.00px;width:33.00px;height:30.80px;background:#ff3a6e;border-radius:5px;"></div>
<svg class="i" style="left:1777.25px;top:503.15px;" width="14.5" height="14.5" viewBox="0 0 24 24" stroke="#fff" stroke-width="1.85"><path d="M4 7h16"/><path d="M10 11v6"/><path d="M14 11v6"/><path d="M5 7l1 12a2 2 0 0 0 2 2h8a2 2 0 0 0 2 -2l1 -12"/><path d="M9 7v-3a1 1 0 0 1 1 -1h4a1 1 0 0 1 1 1v3"/></svg>
<div class="b" style="left:310.00px;top:608.00px;width:1555.00px;height:2.00px;background:#efefef;border-radius:0px;"></div>
<span class="t" style="left:335.50px;top:566.05px;font-size:14.28px;letter-spacing:0.063px;color:#293240;">4</span>
<div class="b" style="left:379.00px;top:555.00px;width:123.00px;height:40.70px;background:#fff;border-radius:6px;border:1px solid #0CAF60;"></div>
<span class="t" style="left:400.58px;top:566.05px;font-size:14.28px;letter-spacing:0.169px;color:#0CAF60;">1706098112</span>
<span class="t" style="left:527.80px;top:566.05px;font-size:14.28px;letter-spacing:-0.112px;color:#293240;">Desk</span>
<span class="t" style="left:685.00px;top:566.05px;font-size:14.28px;letter-spacing:0.311px;color:#293240;">Warren Bruen</span>
<span class="t" style="left:873.50px;top:566.05px;font-size:14.28px;letter-spacing:0.305px;color:#293240;">WorkDo</span>
<div class="b" style="left:970.00px;top:563.00px;width:73.00px;height:25.75px;background:#ffa834;border-radius:4.5px;"></div>
<span class="t" style="left:986.09px;top:566.14px;font-size:10.70px;letter-spacing:0.391px;color:#fff;">pending</span>
<span class="t" style="left:1118.00px;top:566.05px;font-size:14.28px;letter-spacing:0.403px;color:#293240;">Furniture</span>
<span class="t" style="left:1252.30px;top:566.05px;font-size:14.28px;letter-spacing:-0.251px;color:#293240;">---</span>
<div class="b" style="left:1385.00px;top:563.00px;width:72.00px;height:25.75px;background:#ffa21d;border-radius:4.5px;"></div>
<span class="t" style="left:1400.59px;top:566.14px;font-size:10.70px;letter-spacing:0.391px;color:#fff;">pending</span>
<span class="t" style="left:1533.80px;top:566.05px;font-size:14.28px;letter-spacing:0.245px;color:#293240;">9 months ago</span>
<div class="b" style="left:1646.00px;top:561.00px;width:33.00px;height:30.80px;background:#6fd943;border-radius:5px;"></div>
<svg class="i" style="left:1655.25px;top:569.15px;" width="14.5" height="14.5" viewBox="0 0 24 24" stroke="#fff" stroke-width="1.85"><path d="M10 14a3.5 3.5 0 0 0 5 0l4 -4a3.5 3.5 0 0 0 -5 -5l-.5 .5"/><path d="M14 10a3.5 3.5 0 0 0 -5 0l-4 4a3.5 3.5 0 0 0 5 5l.5 -.5"/></svg>
<div class="b" style="left:1687.00px;top:561.00px;width:32.00px;height:30.80px;background:#6c757d;border-radius:5px;"></div>
<svg class="i" style="left:1695.75px;top:569.15px;" width="14.5" height="14.5" viewBox="0 0 24 24" stroke="#fff" stroke-width="1.85"><path d="M16.7 8a3 3 0 0 0 -2.7 -2h-4a3 3 0 0 0 0 6h4a3 3 0 0 1 0 6h-4a3 3 0 0 1 -2.7 -2"/><path d="M12 3v3m0 12v3"/></svg>
<div class="b" style="left:1728.00px;top:561.00px;width:32.00px;height:30.80px;background:#ffa21d;border-radius:5px;"></div>
<svg class="i" style="left:1736.75px;top:569.15px;" width="14.5" height="14.5" viewBox="0 0 24 24" stroke="#fff" stroke-width="1.85"><circle cx="12" cy="12" r="2"/><path d="M22 12c-2.667 4.667 -6 7 -10 7s-7.333 -2.333 -10 -7c2.667 -4.667 6 -7 10 -7s7.333 2.333 10 7"/></svg>
<div class="b" style="left:1768.00px;top:561.00px;width:33.00px;height:30.80px;background:#3ec9d6;border-radius:5px;"></div>
<svg class="i" style="left:1777.25px;top:569.15px;" width="14.5" height="14.5" viewBox="0 0 24 24" stroke="#fff" stroke-width="1.85"><path d="M4 20h4l10.5 -10.5a1.5 1.5 0 0 0 -4 -4l-10.5 10.5v4"/><path d="M13.5 6.5l4 4"/></svg>
<div class="b" style="left:1809.00px;top:561.00px;width:32.00px;height:30.80px;background:#ff3a6e;border-radius:5px;"></div>
<svg class="i" style="left:1817.75px;top:569.15px;" width="14.5" height="14.5" viewBox="0 0 24 24" stroke="#fff" stroke-width="1.85"><path d="M4 7h16"/><path d="M10 11v6"/><path d="M14 11v6"/><path d="M5 7l1 12a2 2 0 0 0 2 2h8a2 2 0 0 0 2 -2l1 -12"/><path d="M9 7v-3a1 1 0 0 1 1 -1h4a1 1 0 0 1 1 1v3"/></svg>
<div class="b" style="left:310.00px;top:673.00px;width:1555.00px;height:2.00px;background:#efefef;border-radius:0px;"></div>
<span class="t" style="left:335.50px;top:632.05px;font-size:14.28px;letter-spacing:0.063px;color:#293240;">5</span>
<div class="b" style="left:379.00px;top:621.00px;width:123.00px;height:40.70px;background:#fff;border-radius:6px;border:1px solid #0CAF60;"></div>
<span class="t" style="left:400.58px;top:632.05px;font-size:14.28px;letter-spacing:0.063px;color:#0CAF60;">1706097918</span>
<span class="t" style="left:527.80px;top:632.05px;font-size:14.28px;letter-spacing:0.457px;color:#293240;">Defibrillator</span>
<span class="t" style="left:685.00px;top:632.05px;font-size:14.28px;letter-spacing:0.267px;color:#293240;">Mohammed Cruickshank</span>
<span class="t" style="left:873.50px;top:632.05px;font-size:14.28px;letter-spacing:0.305px;color:#293240;">WorkDo</span>
<div class="b" style="left:970.00px;top:628.00px;width:73.00px;height:26.75px;background:#ffa834;border-radius:4.5px;"></div>
<span class="t" style="left:986.09px;top:631.14px;font-size:10.70px;letter-spacing:0.391px;color:#fff;">pending</span>
<span class="t" style="left:1118.00px;top:632.05px;font-size:14.28px;letter-spacing:0.084px;color:#293240;">Medical Supplies</span>
<span class="t" style="left:1252.30px;top:632.05px;font-size:14.28px;letter-spacing:-0.251px;color:#293240;">---</span>
<div class="b" style="left:1385.00px;top:628.00px;width:72.00px;height:26.75px;background:#ffa21d;border-radius:4.5px;"></div>
<span class="t" style="left:1400.59px;top:631.14px;font-size:10.70px;letter-spacing:0.391px;color:#fff;">pending</span>
<span class="t" style="left:1533.80px;top:632.05px;font-size:14.28px;letter-spacing:0.245px;color:#293240;">9 months ago</span>
<div class="b" style="left:1646.00px;top:626.00px;width:33.00px;height:30.80px;background:#6fd943;border-radius:5px;"></div>
<svg class="i" style="left:1655.25px;top:634.15px;" width="14.5" height="14.5" viewBox="0 0 24 24" stroke="#fff" stroke-width="1.85"><path d="M10 14a3.5 3.5 0 0 0 5 0l4 -4a3.5 3.5 0 0 0 -5 -5l-.5 .5"/><path d="M14 10a3.5 3.5 0 0 0 -5 0l-4 4a3.5 3.5 0 0 0 5 5l.5 -.5"/></svg>
<div class="b" style="left:1687.00px;top:626.00px;width:32.00px;height:30.80px;background:#6c757d;border-radius:5px;"></div>
<svg class="i" style="left:1695.75px;top:634.15px;" width="14.5" height="14.5" viewBox="0 0 24 24" stroke="#fff" stroke-width="1.85"><path d="M16.7 8a3 3 0 0 0 -2.7 -2h-4a3 3 0 0 0 0 6h4a3 3 0 0 1 0 6h-4a3 3 0 0 1 -2.7 -2"/><path d="M12 3v3m0 12v3"/></svg>
<div class="b" style="left:1728.00px;top:626.00px;width:32.00px;height:30.80px;background:#ffa21d;border-radius:5px;"></div>
<svg class="i" style="left:1736.75px;top:634.15px;" width="14.5" height="14.5" viewBox="0 0 24 24" stroke="#fff" stroke-width="1.85"><circle cx="12" cy="12" r="2"/><path d="M22 12c-2.667 4.667 -6 7 -10 7s-7.333 -2.333 -10 -7c2.667 -4.667 6 -7 10 -7s7.333 2.333 10 7"/></svg>
<div class="b" style="left:1768.00px;top:626.00px;width:33.00px;height:30.80px;background:#3ec9d6;border-radius:5px;"></div>
<svg class="i" style="left:1777.25px;top:634.15px;" width="14.5" height="14.5" viewBox="0 0 24 24" stroke="#fff" stroke-width="1.85"><path d="M4 20h4l10.5 -10.5a1.5 1.5 0 0 0 -4 -4l-10.5 10.5v4"/><path d="M13.5 6.5l4 4"/></svg>
<div class="b" style="left:1809.00px;top:626.00px;width:32.00px;height:30.80px;background:#ff3a6e;border-radius:5px;"></div>
<svg class="i" style="left:1817.75px;top:634.15px;" width="14.5" height="14.5" viewBox="0 0 24 24" stroke="#fff" stroke-width="1.85"><path d="M4 7h16"/><path d="M10 11v6"/><path d="M14 11v6"/><path d="M5 7l1 12a2 2 0 0 0 2 2h8a2 2 0 0 0 2 -2l1 -12"/><path d="M9 7v-3a1 1 0 0 1 1 -1h4a1 1 0 0 1 1 1v3"/></svg>
<div class="b" style="left:310.00px;top:739.00px;width:1555.00px;height:2.00px;background:#efefef;border-radius:0px;"></div>
<span class="t" style="left:335.50px;top:698.05px;font-size:14.28px;letter-spacing:0.063px;color:#293240;">6</span>
<div class="b" style="left:379.00px;top:687.00px;width:123.00px;height:40.70px;background:#fff;border-radius:6px;border:1px solid #0CAF60;"></div>
<span class="t" style="left:400.58px;top:698.05px;font-size:14.28px;letter-spacing:0.063px;color:#0CAF60;">1706097814</span>
<span class="t" style="left:527.80px;top:698.05px;font-size:14.28px;letter-spacing:-0.020px;color:#293240;">Credenza</span>
<span class="t" style="left:685.00px;top:698.05px;font-size:14.28px;letter-spacing:0.024px;color:#293240;">Isabella Bauch</span>
<span class="t" style="left:873.50px;top:698.05px;font-size:14.28px;letter-spacing:0.305px;color:#293240;">WorkDo</span>
<div class="b" style="left:970.00px;top:694.00px;width:73.00px;height:26.75px;background:#ffa834;border-radius:4.5px;"></div>
<span class="t" style="left:986.09px;top:697.14px;font-size:10.70px;letter-spacing:0.391px;color:#fff;">pending</span>
<span class="t" style="left:1118.00px;top:698.05px;font-size:14.28px;letter-spacing:0.403px;color:#293240;">Furniture</span>
<span class="t" style="left:1252.30px;top:698.05px;font-size:14.28px;letter-spacing:-0.251px;color:#293240;">---</span>
<div class="b" style="left:1385.00px;top:694.00px;width:72.00px;height:26.75px;background:#ffa21d;border-radius:4.5px;"></div>
<span class="t" style="left:1400.59px;top:697.14px;font-size:10.70px;letter-spacing:0.391px;color:#fff;">pending</span>
<span class="t" style="left:1533.80px;top:698.05px;font-size:14.28px;letter-spacing:0.245px;color:#293240;">9 months ago</span>
<div class="b" style="left:1646.00px;top:692.00px;width:33.00px;height:30.80px;background:#6fd943;border-radius:5px;"></div>
<svg class="i" style="left:1655.25px;top:700.15px;" width="14.5" height="14.5" viewBox="0 0 24 24" stroke="#fff" stroke-width="1.85"><path d="M10 14a3.5 3.5 0 0 0 5 0l4 -4a3.5 3.5 0 0 0 -5 -5l-.5 .5"/><path d="M14 10a3.5 3.5 0 0 0 -5 0l-4 4a3.5 3.5 0 0 0 5 5l.5 -.5"/></svg>
<div class="b" style="left:1687.00px;top:692.00px;width:32.00px;height:30.80px;background:#6c757d;border-radius:5px;"></div>
<svg class="i" style="left:1695.75px;top:700.15px;" width="14.5" height="14.5" viewBox="0 0 24 24" stroke="#fff" stroke-width="1.85"><path d="M16.7 8a3 3 0 0 0 -2.7 -2h-4a3 3 0 0 0 0 6h4a3 3 0 0 1 0 6h-4a3 3 0 0 1 -2.7 -2"/><path d="M12 3v3m0 12v3"/></svg>
<div class="b" style="left:1728.00px;top:692.00px;width:32.00px;height:30.80px;background:#ffa21d;border-radius:5px;"></div>
<svg class="i" style="left:1736.75px;top:700.15px;" width="14.5" height="14.5" viewBox="0 0 24 24" stroke="#fff" stroke-width="1.85"><circle cx="12" cy="12" r="2"/><path d="M22 12c-2.667 4.667 -6 7 -10 7s-7.333 -2.333 -10 -7c2.667 -4.667 6 -7 10 -7s7.333 2.333 10 7"/></svg>
<div class="b" style="left:1768.00px;top:692.00px;width:33.00px;height:30.80px;background:#3ec9d6;border-radius:5px;"></div>
<svg class="i" style="left:1777.25px;top:700.15px;" width="14.5" height="14.5" viewBox="0 0 24 24" stroke="#fff" stroke-width="1.85"><path d="M4 20h4l10.5 -10.5a1.5 1.5 0 0 0 -4 -4l-10.5 10.5v4"/><path d="M13.5 6.5l4 4"/></svg>
<div class="b" style="left:1809.00px;top:692.00px;width:32.00px;height:30.80px;background:#ff3a6e;border-radius:5px;"></div>
<svg class="i" style="left:1817.75px;top:700.15px;" width="14.5" height="14.5" viewBox="0 0 24 24" stroke="#fff" stroke-width="1.85"><path d="M4 7h16"/><path d="M10 11v6"/><path d="M14 11v6"/><path d="M5 7l1 12a2 2 0 0 0 2 2h8a2 2 0 0 0 2 -2l1 -12"/><path d="M9 7v-3a1 1 0 0 1 1 -1h4a1 1 0 0 1 1 1v3"/></svg>
<div class="b" style="left:310.00px;top:805.00px;width:1555.00px;height:2.00px;background:#efefef;border-radius:0px;"></div>
<span class="t" style="left:335.50px;top:764.05px;font-size:14.28px;letter-spacing:0.063px;color:#293240;">7</span>
<div class="b" style="left:379.00px;top:752.00px;width:123.00px;height:40.70px;background:#fff;border-radius:6px;border:1px solid #0CAF60;"></div>
<span class="t" style="left:400.58px;top:764.05px;font-size:14.28px;letter-spacing:0.063px;color:#0CAF60;">1706097708</span>
<span class="t" style="left:527.80px;top:764.05px;font-size:14.28px;letter-spacing:0.230px;color:#293240;">1aLaptop</span>
<span class="t" style="left:685.00px;top:764.05px;font-size:14.28px;letter-spacing:0.150px;color:#293240;">Addie Bechtelar</span>
<span class="t" style="left:873.50px;top:764.05px;font-size:14.28px;letter-spacing:0.305px;color:#293240;">WorkDo</span>
<div class="b" style="left:970.00px;top:760.00px;width:80.30px;height:25.75px;background:#00c800;border-radius:4.5px;"></div>
<span class="t" style="left:986.40px;top:763.14px;font-size:10.70px;letter-spacing:0.256px;color:#fff;">Delivered</span>
<span class="t" style="left:1118.00px;top:764.05px;font-size:14.28px;letter-spacing:0.054px;color:#293240;">Electronics</span>
<span class="t" style="left:1252.30px;top:764.05px;font-size:14.28px;letter-spacing:-0.110px;color:#293240;">cash</span>
<div class="b" style="left:1385.00px;top:760.00px;width:70.00px;height:25.75px;background:#6fd943;border-radius:4.5px;"></div>
<span class="t" style="left:1400.96px;top:763.14px;font-size:10.70px;letter-spacing:-0.083px;color:#fff;">success</span>
<span class="t" style="left:1533.80px;top:764.05px;font-size:14.28px;letter-spacing:0.245px;color:#293240;">9 months ago</span>
<div class="b" style="left:1646.00px;top:758.00px;width:33.00px;height:30.80px;background:#6fd943;border-radius:5px;"></div>
<svg class="i" style="left:1655.25px;top:766.15px;" width="14.5" height="14.5" viewBox="0 0 24 24" stroke="#fff" stroke-width="1.85"><path d="M10 14a3.5 3.5 0 0 0 5 0l4 -4a3.5 3.5 0 0 0 -5 -5l-.5 .5"/><path d="M14 10a3.5 3.5 0 0 0 -5 0l-4 4a3.5 3.5 0 0 0 5 5l.5 -.5"/></svg>
<div class="b" style="left:1687.00px;top:758.00px;width:32.00px;height:30.80px;background:#ffa21d;border-radius:5px;"></div>
<svg class="i" style="left:1695.75px;top:766.15px;" width="14.5" height="14.5" viewBox="0 0 24 24" stroke="#fff" stroke-width="1.85"><circle cx="12" cy="12" r="2"/><path d="M22 12c-2.667 4.667 -6 7 -10 7s-7.333 -2.333 -10 -7c2.667 -4.667 6 -7 10 -7s7.333 2.333 10 7"/></svg>
<div class="b" style="left:1728.00px;top:758.00px;width:32.00px;height:30.80px;background:#3ec9d6;border-radius:5px;"></div>
<svg class="i" style="left:1736.75px;top:766.15px;" width="14.5" height="14.5" viewBox="0 0 24 24" stroke="#fff" stroke-width="1.85"><path d="M4 20h4l10.5 -10.5a1.5 1.5 0 0 0 -4 -4l-10.5 10.5v4"/><path d="M13.5 6.5l4 4"/></svg>
<div class="b" style="left:1768.00px;top:758.00px;width:33.00px;height:30.80px;background:#ff3a6e;border-radius:5px;"></div>
<svg class="i" style="left:1777.25px;top:766.15px;" width="14.5" height="14.5" viewBox="0 0 24 24" stroke="#fff" stroke-width="1.85"><path d="M4 7h16"/><path d="M10 11v6"/><path d="M14 11v6"/><path d="M5 7l1 12a2 2 0 0 0 2 2h8a2 2 0 0 0 2 -2l1 -12"/><path d="M9 7v-3a1 1 0 0 1 1 -1h4a1 1 0 0 1 1 1v3"/></svg>
<div class="b" style="left:310.00px;top:871.00px;width:1555.00px;height:2.00px;background:#efefef;border-radius:0px;"></div>
<span class="t" style="left:335.50px;top:829.05px;font-size:14.28px;letter-spacing:0.063px;color:#293240;">8</span>
<div class="b" style="left:379.00px;top:818.00px;width:123.00px;height:40.70px;background:#fff;border-radius:6px;border:1px solid #0CAF60;"></div>
<span class="t" style="left:400.58px;top:829.05px;font-size:14.28px;letter-spacing:0.063px;color:#0CAF60;">1706097554</span>
<span class="t" style="left:527.80px;top:829.05px;font-size:14.28px;letter-spacing:0.173px;color:#293240;">Medical Products</span>
<span class="t" style="left:685.00px;top:829.05px;font-size:14.28px;letter-spacing:-0.061px;color:#293240;">Marcelle Pagac</span>
<span class="t" style="left:873.50px;top:829.05px;font-size:14.28px;letter-spacing:0.305px;color:#293240;">WorkDo</span>
<div class="b" style="left:970.00px;top:826.00px;width:80.30px;height:25.75px;background:#00c800;border-radius:4.5px;"></div>
<span class="t" style="left:986.40px;top:829.14px;font-size:10.70px;letter-spacing:0.256px;color:#fff;">Delivered</span>
<span class="t" style="left:1118.00px;top:829.05px;font-size:14.28px;letter-spacing:0.084px;color:#293240;">Medical Supplies</span>
<span class="t" style="left:1252.30px;top:829.05px;font-size:14.28px;letter-spacing:-0.110px;color:#293240;">cash</span>
<div class="b" style="left:1385.00px;top:826.00px;width:70.00px;height:25.75px;background:#6fd943;border-radius:4.5px;"></div>
<span class="t" style="left:1400.96px;top:829.14px;font-size:10.70px;letter-spacing:-0.083px;color:#fff;">success</span>
<span class="t" style="left:1533.80px;top:829.05px;font-size:14.28px;letter-spacing:0.245px;color:#293240;">9 months ago</span>
<div class="b" style="left:1646.00px;top:824.00px;width:33.00px;height:30.80px;background:#6fd943;border-radius:5px;"></div>
<svg class="i" style="left:1655.25px;top:832.15px;" width="14.5" height="14.5" viewBox="0 0 24 24" stroke="#fff" stroke-width="1.85"><path d="M10 14a3.5 3.5 0 0 0 5 0l4 -4a3.5 3.5 0 0 0 -5 -5l-.5 .5"/><path d="M14 10a3.5 3.5 0 0 0 -5 0l-4 4a3.5 3.5 0 0 0 5 5l.5 -.5"/></svg>
<div class="b" style="left:1687.00px;top:824.00px;width:32.00px;height:30.80px;background:#ffa21d;border-radius:5px;"></div>
<svg class="i" style="left:1695.75px;top:832.15px;" width="14.5" height="14.5" viewBox="0 0 24 24" stroke="#fff" stroke-width="1.85"><circle cx="12" cy="12" r="2"/><path d="M22 12c-2.667 4.667 -6 7 -10 7s-7.333 -2.333 -10 -7c2.667 -4.667 6 -7 10 -7s7.333 2.333 10 7"/></svg>
<div class="b" style="left:1728.00px;top:824.00px;width:32.00px;height:30.80px;background:#3ec9d6;border-radius:5px;"></div>
<svg class="i" style="left:1736.75px;top:832.15px;" width="14.5" height="14.5" viewBox="0 0 24 24" stroke="#fff" stroke-width="1.85"><path d="M4 20h4l10.5 -10.5a1.5 1.5 0 0 0 -4 -4l-10.5 10.5v4"/><path d="M13.5 6.5l4 4"/></svg>
<div class="b" style="left:1768.00px;top:824.00px;width:33.00px;height:30.80px;background:#ff3a6e;border-radius:5px;"></div>
<svg class="i" style="left:1777.25px;top:832.15px;" width="14.5" height="14.5" viewBox="0 0 24 24" stroke="#fff" stroke-width="1.85"><path d="M4 7h16"/><path d="M10 11v6"/><path d="M14 11v6"/><path d="M5 7l1 12a2 2 0 0 0 2 2h8a2 2 0 0 0 2 -2l1 -12"/><path d="M9 7v-3a1 1 0 0 1 1 -1h4a1 1 0 0 1 1 1v3"/></svg>
<div class="b" style="left:310.00px;top:936.00px;width:1555.00px;height:2.00px;background:#efefef;border-radius:0px;"></div>
<span class="t" style="left:335.50px;top:895.05px;font-size:14.28px;letter-spacing:0.063px;color:#293240;">9</span>
<div class="b" style="left:379.00px;top:884.00px;width:123.00px;height:40.70px;background:#fff;border-radius:6px;border:1px solid #0CAF60;"></div>
<span class="t" style="left:400.58px;top:895.05px;font-size:14.28px;letter-spacing:0.063px;color:#0CAF60;">1706097429</span>
<span class="t" style="left:527.80px;top:895.05px;font-size:14.28px;letter-spacing:0.103px;color:#293240;">Electronics Items</span>
<span class="t" style="left:685.00px;top:895.05px;font-size:14.28px;letter-spacing:0.135px;color:#293240;">Bret Predovic</span>
<span class="t" style="left:873.50px;top:895.05px;font-size:14.28px;letter-spacing:0.305px;color:#293240;">WorkDo</span>
<div class="b" style="left:970.00px;top:891.00px;width:123.00px;height:26.75px;background:#4466e0;border-radius:4.5px;"></div>
<span class="t" style="left:986.17px;top:894.14px;font-size:10.70px;letter-spacing:-0.019px;color:#fff;">Ready For Packing</span>
<span class="t" style="left:1118.00px;top:895.05px;font-size:14.28px;letter-spacing:0.054px;color:#293240;">Electronics</span>
<span class="t" style="left:1252.30px;top:895.05px;font-size:14.28px;letter-spacing:-0.110px;color:#293240;">cash</span>
<div class="b" style="left:1385.00px;top:891.00px;width:70.00px;height:26.75px;background:#6fd943;border-radius:4.5px;"></div>
<span class="t" style="left:1400.96px;top:894.14px;font-size:10.70px;letter-spacing:-0.083px;color:#fff;">success</span>
<span class="t" style="left:1533.80px;top:895.05px;font-size:14.28px;letter-spacing:0.245px;color:#293240;">9 months ago</span>
<div class="b" style="left:1646.00px;top:889.00px;width:33.00px;height:30.80px;background:#6fd943;border-radius:5px;"></div>
<svg class="i" style="left:1655.25px;top:897.15px;" width="14.5" height="14.5" viewBox="0 0 24 24" stroke="#fff" stroke-width="1.85"><path d="M10 14a3.5 3.5 0 0 0 5 0l4 -4a3.5 3.5 0 0 0 -5 -5l-.5 .5"/><path d="M14 10a3.5 3.5 0 0 0 -5 0l-4 4a3.5 3.5 0 0 0 5 5l.5 -.5"/></svg>
<div class="b" style="left:1687.00px;top:889.00px;width:32.00px;height:30.80px;background:#6c757d;border-radius:5px;"></div>
<svg class="i" style="left:1695.75px;top:897.15px;" width="14.5" height="14.5" viewBox="0 0 24 24" stroke="#fff" stroke-width="1.85"><path d="M16.7 8a3 3 0 0 0 -2.7 -2h-4a3 3 0 0 0 0 6h4a3 3 0 0 1 0 6h-4a3 3 0 0 1 -2.7 -2"/><path d="M12 3v3m0 12v3"/></svg>
<div class="b" style="left:1728.00px;top:889.00px;width:32.00px;height:30.80px;background:#ffa21d;border-radius:5px;"></div>
<svg class="i" style="left:1736.75px;top:897.15px;" width="14.5" height="14.5" viewBox="0 0 24 24" stroke="#fff" stroke-width="1.85"><circle cx="12" cy="12" r="2"/><path d="M22 12c-2.667 4.667 -6 7 -10 7s-7.333 -2.333 -10 -7c2.667 -4.667 6 -7 10 -7s7.333 2.333 10 7"/></svg>
<div class="b" style="left:1768.00px;top:889.00px;width:33.00px;height:30.80px;background:#3ec9d6;border-radius:5px;"></div>
<svg class="i" style="left:1777.25px;top:897.15px;" width="14.5" height="14.5" viewBox="0 0 24 24" stroke="#fff" stroke-width="1.85"><path d="M4 20h4l10.5 -10.5a1.5 1.5 0 0 0 -4 -4l-10.5 10.5v4"/><path d="M13.5 6.5l4 4"/></svg>
<div class="b" style="left:1809.00px;top:889.00px;width:32.00px;height:30.80px;background:#ff3a6e;border-radius:5px;"></div>
<svg class="i" style="left:1817.75px;top:897.15px;" width="14.5" height="14.5" viewBox="0 0 24 24" stroke="#fff" stroke-width="1.85"><path d="M4 7h16"/><path d="M10 11v6"/><path d="M14 11v6"/><path d="M5 7l1 12a2 2 0 0 0 2 2h8a2 2 0 0 0 2 -2l1 -12"/><path d="M9 7v-3a1 1 0 0 1 1 -1h4a1 1 0 0 1 1 1v3"/></svg>
<div class="b" style="left:310.00px;top:1002.00px;width:1555.00px;height:1.00px;background:#efefef;border-radius:0px;"></div>
<span class="t" style="left:335.50px;top:961.05px;font-size:14.28px;letter-spacing:0.063px;color:#293240;">10</span>
<div class="b" style="left:379.00px;top:950.00px;width:123.00px;height:40.70px;background:#fff;border-radius:6px;border:1px solid #0CAF60;"></div>
<span class="t" style="left:400.58px;top:961.05px;font-size:14.28px;letter-spacing:0.063px;color:#0CAF60;">1706097248</span>
<span class="t" style="left:527.80px;top:961.05px;font-size:14.28px;letter-spacing:0.317px;color:#293240;">Furnitures</span>
<span class="t" style="left:685.00px;top:961.05px;font-size:14.28px;letter-spacing:0.270px;color:#293240;">Donna Burris</span>
<span class="t" style="left:873.50px;top:961.05px;font-size:14.28px;letter-spacing:0.305px;color:#293240;">WorkDo</span>
<div class="b" style="left:970.00px;top:957.00px;width:80.30px;height:26.75px;background:#00c800;border-radius:4.5px;"></div>
<span class="t" style="left:986.40px;top:960.14px;font-size:10.70px;letter-spacing:0.256px;color:#fff;">Delivered</span>
<span class="t" style="left:1118.00px;top:961.05px;font-size:14.28px;letter-spacing:0.403px;color:#293240;">Furniture</span>
<span class="t" style="left:1252.30px;top:961.05px;font-size:14.28px;letter-spacing:-0.110px;color:#293240;">cash</span>
<div class="b" style="left:1385.00px;top:957.00px;width:70.00px;height:26.75px;background:#6fd943;border-radius:4.5px;"></div>
<span class="t" style="left:1400.96px;top:960.14px;font-size:10.70px;letter-spacing:-0.083px;color:#fff;">success</span>
<span class="t" style="left:1533.80px;top:961.05px;font-size:14.28px;letter-spacing:0.245px;color:#293240;">9 months ago</span>
<div class="b" style="left:1646.00px;top:955.00px;width:33.00px;height:30.80px;background:#6fd943;border-radius:5px;"></div>
<svg class="i" style="left:1655.25px;top:963.15px;" width="14.5" height="14.5" viewBox="0 0 24 24" stroke="#fff" stroke-width="1.85"><path d="M10 14a3.5 3.5 0 0 0 5 0l4 -4a3.5 3.5 0 0 0 -5 -5l-.5 .5"/><path d="M14 10a3.5 3.5 0 0 0 -5 0l-4 4a3.5 3.5 0 0 0 5 5l.5 -.5"/></svg>
<div class="b" style="left:1687.00px;top:955.00px;width:32.00px;height:30.80px;background:#ffa21d;border-radius:5px;"></div>
<svg class="i" style="left:1695.75px;top:963.15px;" width="14.5" height="14.5" viewBox="0 0 24 24" stroke="#fff" stroke-width="1.85"><circle cx="12" cy="12" r="2"/><path d="M22 12c-2.667 4.667 -6 7 -10 7s-7.333 -2.333 -10 -7c2.667 -4.667 6 -7 10 -7s7.333 2.333 10 7"/></svg>
<div class="b" style="left:1728.00px;top:955.00px;width:32.00px;height:30.80px;background:#3ec9d6;border-radius:5px;"></div>
<svg class="i" style="left:1736.75px;top:963.15px;" width="14.5" height="14.5" viewBox="0 0 24 24" stroke="#fff" stroke-width="1.85"><path d="M4 20h4l10.5 -10.5a1.5 1.5 0 0 0 -4 -4l-10.5 10.5v4"/><path d="M13.5 6.5l4 4"/></svg>
<div class="b" style="left:1768.00px;top:955.00px;width:33.00px;height:30.80px;background:#ff3a6e;border-radius:5px;"></div>
<svg class="i" style="left:1777.25px;top:963.15px;" width="14.5" height="14.5" viewBox="0 0 24 24" stroke="#fff" stroke-width="1.85"><path d="M4 7h16"/><path d="M10 11v6"/><path d="M14 11v6"/><path d="M5 7l1 12a2 2 0 0 0 2 2h8a2 2 0 0 0 2 -2l1 -12"/><path d="M9 7v-3a1 1 0 0 1 1 -1h4a1 1 0 0 1 1 1v3"/></svg>
<span class="t" style="left:310.00px;top:1047.48px;font-size:14.28px;letter-spacing:0.139px;color:#293240;">Showing 1 to 10 of 10 entries</span>
<div class="b" style="left:1747.00px;top:1036.00px;width:118.00px;height:37.80px;background:#fff;border-radius:9px;border:1px solid #dfe2e6;"></div>
<div class="b" style="left:1789.00px;top:1036.00px;width:35.00px;height:37.80px;background:#0CAF60;border-radius:0px;"></div>
<svg class="i" style="left:0;top:0" width="1920" height="1080" stroke="#525b69" stroke-width="1.35" stroke-linecap="butt" stroke-linejoin="miter"><path d="M1770.90 1050.62L1766.60 1054.60L1770.90 1058.57"/></svg>
<svg class="b" style="left:0;top:0" width="1920" height="1080"><path fill="#fff" d="M1803.3 1051.75L1806.55 1048.95H1807.8V1060.95H1806.3V1050.85L1804.15 1052.7z"/></svg>
<svg class="i" style="left:0;top:0" width="1920" height="1080" stroke="#525b69" stroke-width="1.35" stroke-linecap="butt" stroke-linejoin="miter"><path d="M1841.60 1050.62L1845.90 1054.60L1841.60 1058.57"/></svg>
</body></html>
